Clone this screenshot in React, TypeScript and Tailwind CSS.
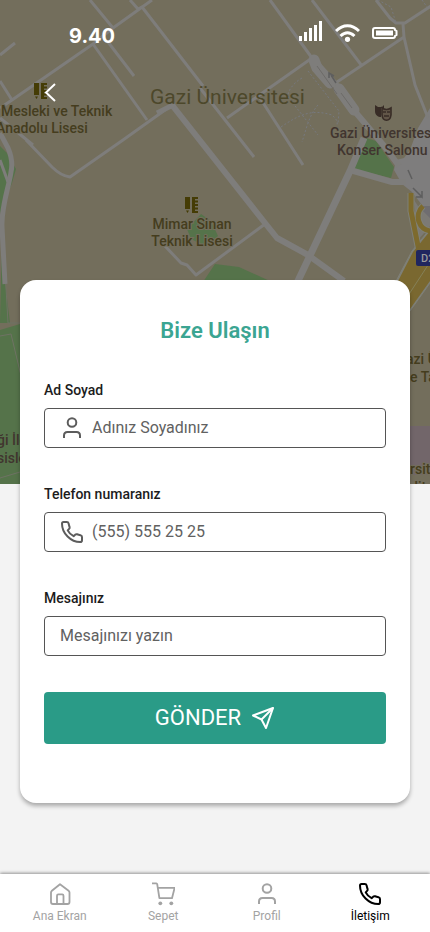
import type { ReactNode } from "react";

type IconProps = { className?: string };

function UserIcon({ className }: IconProps) {
  return (
    <svg viewBox="0 0 24 24" className={className} fill="none" stroke="currentColor" strokeWidth="2" aria-hidden="true">
      <circle cx="12" cy="6.500" r="4.300" />
      <path d="M4 22v-2.500c0-2.300 1.300-3.500 3.500-3.500h9c2.200 0 3.500 1.200 3.500 3.500V22" />
    </svg>
  );
}

function PhoneIcon({ className }: IconProps) {
  return (
    <svg viewBox="0 0 24 24" className={className} fill="none" stroke="currentColor" strokeWidth="2" strokeLinejoin="round" aria-hidden="true">
      <path d="M3.500 2h3.300c1.100 0 1.600.5 1.800 1.400.3 1.700.7 2.900 1 3.600.3.800 0 1.400-.5 1.900l-1.400 1.500c1.300 2.600 3.200 4.500 5.900 5.800l1.500-1.400c.5-.5 1.200-.8 2-.5 1 .4 2.100.7 3.400.9 1 .2 1.500.8 1.500 1.700v3.400c0 1.100-.6 1.800-1.700 1.800C10.800 22.100 2 13.400 2 3.700 2 2.500 2.500 2 3.500 2z" />
    </svg>
  );
}

function HomeIcon({ className }: IconProps) {
  return (
    <svg viewBox="0 0 24 24" className={className} fill="none" stroke="currentColor" strokeWidth="1.800" strokeLinejoin="round" aria-hidden="true">
      <path d="M3 10.500c0-.8.300-1.300.9-1.800L12 2.200l8.600 6.500c.6.500.9 1 .9 1.800V20c0 1.200-.8 2-2 2H5c-1.200 0-2-.8-2-2z" />
      <path d="M9 22v-8.300c0-.8.500-1.300 1.300-1.300h3.900c.8 0 1.300.5 1.300 1.300V22" />
    </svg>
  );
}

function CartIcon({ className }: IconProps) {
  return (
    <svg viewBox="0 0 24 24" className={className} fill="none" stroke="currentColor" strokeWidth="1.800" strokeLinejoin="round" aria-hidden="true">
      <path d="M1 1.300h4.300c.5 0 .8.300.9.800l2.200 14.100h12.600l2.600-10.300H7" />
      <circle cx="9.300" cy="21.300" r="1.900" fill="currentColor" stroke="none" />
      <circle cx="20.300" cy="21.300" r="1.900" fill="currentColor" stroke="none" />
    </svg>
  );
}

function SendIcon({ className }: IconProps) {
  return (
    <svg viewBox="0 0 24 24" className={className} fill="none" stroke="currentColor" strokeWidth="2" strokeLinejoin="round" aria-hidden="true">
      <path d="M22 2L2 9.500l8.500 4 4.500 8.500z" />
      <path d="M22 2L10.500 13.500" />
    </svg>
  );
}

function SchoolMark({ x, y }: { x: number; y: number }) {
  return (
    <g transform={`translate(${x} ${y})`} fill="#453c05">
      <path d="M0 0h5v12H0zM1 13.500h3L2.500 16zM7 0h6v2H10v1.500h3V5.500H10V7h3v2H10v1.500h3v2H10V14h3v2H7z" />
    </g>
  );
}

function MapBackdrop() {
  return (
    <svg
      className="absolute inset-0 h-full w-full"
      viewBox="0 0 430 484"
      preserveAspectRatio="xMidYMin slice"
      fontFamily="Roboto, 'Noto Sans', sans-serif"
      fontWeight="500"
      aria-hidden="true"
    >
      <rect width="430" height="484" fill="#736e5c" />
      <g fill="#55734a">
        <path d="M0 146l7 7 9 16-4 14L2 208l-2 6z" />
        <path d="M2 232l3 50 5 41H0zM0 330l20-6 30 4v156H0z" />
        <path d="M187 229l14-15 10 7 7 15-13 10-14-7z" />
        <path d="M203 282l12-18 24 3 33 15v8h-69z" />
        <path d="M366 138l10 3 18 26-3 11-38-9z" />
      </g>
      <path d="M410 426h20v49h-20z" fill="#72666a" />
      <path d="M5 270l3 53h14M0 336l11-2 18 75M0 478l30-9" stroke="#6f7264" fill="none" />
      <path d="M430 108l-12 20-8 22-6 8-8 2-2 10 8 14 10 8 20 26z" fill="#7e7d7d" />
      <g fill="none" stroke="#7e7d7b" strokeLinejoin="round">
        <g strokeWidth="3">
          <path d="M90 0l23 28M113 28L152 0M113 28l-20 16L12 100 0 108M108 42l26 34M0 55l15-12M93 44l54 76" />
          <path d="M130 0l8 9 4-2 61 79M0 81l12 19M52 167c5 5 10 9 18 10l53-37 49-35M26 140l26 27M0 118l33 27" />
          <path d="M270 0l42 58-85 60M200 88l54 69M260 98l43 67M312 0l50 66M337 82l67-45M376 0l14 18 6 5h9l26-17M403 24l1 13 11 48 13 33" />
          <path d="M165 246l16 17 6 2 9 10 69-51" />
        </g>
        <path d="M350 170l42 12h14" strokeWidth="6" />
        <path d="M172 105l93 118 12 15 31 17 36 26" strokeWidth="6" />
        <path d="M364 138l-14 33-53 112" strokeWidth="7" />
        <path d="M157 113l18-9" strokeWidth="5" />
        <path d="M312 58l25 28 20 28 28 33 14 19" strokeWidth="6" />
        <path d="M314 60l3 8 13 15M339 89l15 21" strokeWidth="11" strokeLinecap="round" />
        <path d="M0 133l8 15c3 7 5 15 3 24-2 15-10 35-9 55l3 57" strokeWidth="5" />
        <path d="M0 160l8 22" strokeWidth="3" />
      </g>
      <path d="M317 66l20 28M341 93l11 15" stroke="#6d6b68" />
      <g fill="none" stroke="#77797e" strokeDasharray="2 2">
        <path d="M308 71l31 40-1 13M302 78c-9 5-15 14-14 19l30 38M281 127c19-13 31-18 51-12 4 4 6 6 5 10M318 105c-9 10-12 25-16 37M378 0l13 7 5 16M422 0l5 7" />
      </g>
      <path d="M430 206l-8 0-4 12 3 10 9 6z" fill="#6f6d70" />
      <path d="M414 200l4 40 12-14v-8l-12-12z" fill="#7c7a75" />
      <g fill="none" stroke="#7f8078">
        <path d="M411 193v18l8 40M423 206c-9 8-5 25 9 25" strokeWidth="7" />
        <path d="M412 251l18-22v54l-20 28-16-26z" fill="#7f8078" strokeWidth="1" />
      </g>
      <g fill="none" stroke="#7d6a2d">
        <path d="M411 193v18l8 40M423 206c-9 8-5 25 9 25" strokeWidth="5" />
        <path d="M413 252l17-21v50l-20 28-14-24z" fill="#7a6830" stroke="none" />
      </g>
      <path d="M430 262l-30 46" stroke="#858058" fill="none" />
      <path d="M408 170l4 9M413 188l9 9v-6m0 6h-6M331 75l5 8M329 78v-5l5 3" stroke="#5e5e5e" strokeWidth="1.500" fill="none" />
      <rect x="416" y="250" width="20" height="16" rx="2" fill="#20265f" />
      <text x="421" y="262" fontSize="11" fill="#9a9a9a">D2</text>

      <g fill="#453d1e" stroke="#736e5c" strokeWidth="2" paintOrder="stroke" fontSize="14">
        <text x="1" y="116">Mesleki ve Teknik</text>
        <text x="-4" y="133">Anadolu Lisesi</text>
        <text x="192" y="229" textAnchor="middle">Mimar Sinan</text>
        <text x="192" y="246" textAnchor="middle">Teknik Lisesi</text>
        <text x="406" y="364">azi Ünv</text>
        <text x="410" y="382">e Tarih</text>
        <text x="410" y="474">rsites</text>
        <text x="410" y="492">dite</text>
      </g>
      <text x="150" y="104" fontSize="21" fontWeight="400" fill="#4d482b">Gazi Üniversitesi</text>
      <g fill="#41352f" fontSize="14">
        <text x="330" y="138">Gazi Üniversitesi</text>
        <text x="337" y="155">Konser Salonu</text>
        <text x="-3" y="445">ği İlçe</text>
        <text x="-3" y="463">sisleri</text>
      </g>
      <SchoolMark x={34} y={83} />
      <SchoolMark x={185} y={197} />
      <path d="M375 105l3 2h4l2-2v3h-3v9c-3 0-6-2-6-6z" fill="#382c26" />
      <path d="M382 108c3 2 6 2 9 0v7c-1 7-8 7-9 0z" fill="#625648" stroke="#382c26" strokeWidth="1.600" />
      <path d="M383 112h3m1 0h3m-6 4h5" stroke="#382c26" strokeWidth="1.600" />
    </svg>
  );
}

function StatusBar() {
  return (
    <div className="flex items-end justify-between pr-8 pl-[69px] text-white">
      <span className="font-['Inter',sans-serif] text-xl leading-6 font-bold">9.40</span>
      <div className="flex items-center gap-3 pb-1.5">
        <svg className="h-5 w-6" viewBox="0 0 24 20" fill="currentColor" aria-hidden="true">
          <path d="M0 15h3v5H0zM5 11h3v9H5zM10 7h3v13h-3zM15 4h3v16h-3zM20 0h3v20h-3z" />
        </svg>
        <svg className="h-[22px] w-[25px]" viewBox="0 0 25 22" fill="none" stroke="currentColor" strokeWidth="3" aria-hidden="true">
          <path d="M1 11c7-7 16-7 23 0M5.500 16c4.500-4.200 9.500-4.200 14 0" />
          <circle cx="12.500" cy="19.300" r="2.600" fill="currentColor" stroke="none" />
        </svg>
        <svg className="h-5 w-[26px]" viewBox="0 0 26 20" aria-hidden="true">
          <path d="M3 7h18c1 0 2 .6 2 2l1.500 1v4l-1.500 1c0 1.400-1 2-2 2H3c-1 0-2-.6-2-2V9c0-1.400 1-2 2-2z" fill="none" stroke="currentColor" strokeWidth="2" />
          <rect x="4" y="9.500" width="17" height="5" fill="currentColor" />
        </svg>
      </div>
    </div>
  );
}

type FieldProps = { id: string; label: string; placeholder: string; type?: string; icon?: ReactNode };

function Field({ id, label, placeholder, type = "text", icon }: FieldProps) {
  return (
    <div className="flex flex-col gap-2">
      <label htmlFor={id} className="text-sm leading-5 font-medium text-[#1c1c1c]">
        {label}
      </label>
      <div className="flex h-10 items-center gap-2 rounded border border-[#555555] px-[15px] text-[#5c5c5c]">
        {icon}
        <input
          id={id}
          type={type}
          placeholder={placeholder}
          className="min-w-0 flex-1 bg-transparent text-base leading-6 outline-none placeholder:text-[#616161]"
        />
      </div>
    </div>
  );
}

const tabs = [
  { label: "Ana Ekran", icon: <HomeIcon className="size-6" /> },
  { label: "Sepet", icon: <CartIcon className="size-6" /> },
  { label: "Profil", icon: <UserIcon className="size-6" /> },
  { label: "İletişim", icon: <PhoneIcon className="size-6" />, active: true },
];

export default function App() {
  return (
    <div className="flex min-h-screen flex-col bg-[#f3f3f3] font-['Roboto','Noto_Sans',sans-serif]">
      <header className="relative h-[484px] shrink-0 overflow-hidden">
        <MapBackdrop />
        <div className="relative pt-5">
          <StatusBar />
          <button type="button" aria-label="Geri" className="mt-8 ml-[38px] flex size-6 items-center justify-center text-white">
            <svg className="h-5 w-3" viewBox="0 0 12 20" fill="none" stroke="currentColor" strokeWidth="2" aria-hidden="true">
              <path d="M11 2L2 10.500 11 19" />
            </svg>
          </button>
        </div>
      </header>

      <main className="relative mx-5 -mt-[204px] mb-6 rounded-2xl bg-white px-6 pt-9 pb-[59px] shadow-[0_3px_4px_0_rgba(0,0,0,0.3)]">
        <h1 className="text-center text-[22px] leading-[30px] font-semibold text-[#3ba592]">Bize Ulaşın</h1>
        <form className="mt-[34px] flex flex-col gap-9" onSubmit={(e) => e.preventDefault()}>
          <Field id="name" label="Ad Soyad" placeholder="Adınız Soyadınız" icon={<UserIcon className="size-6" />} />
          <Field id="phone" type="tel" label="Telefon numaranız" placeholder="(555) 555 25 25" icon={<PhoneIcon className="size-6" />} />
          <Field id="message" label="Mesajınız" placeholder="Mesajınızı yazın" />
          <button type="submit" className="flex h-[52px] items-center justify-center gap-2.5 rounded bg-[#2a9b87] text-[22px] leading-7 text-white">
            GÖNDER
            <SendIcon className="size-6" />
          </button>
        </form>
      </main>

      <nav className="mt-auto flex h-[58px] justify-around bg-white px-2 pt-2 shadow-[0_-1px_3px_rgba(0,0,0,0.4)]">
        {tabs.map((tab) => (
          <a
            key={tab.label}
            href="#"
            aria-current={tab.active ? "page" : undefined}
            className={`flex flex-1 flex-col items-center gap-0.5 text-xs leading-4 ${tab.active ? "text-black" : "text-[#a3a3a3]"}`}
          >
            {tab.icon}
            <span>{tab.label}</span>
          </a>
        ))}
      </nav>
    </div>
  );
}
